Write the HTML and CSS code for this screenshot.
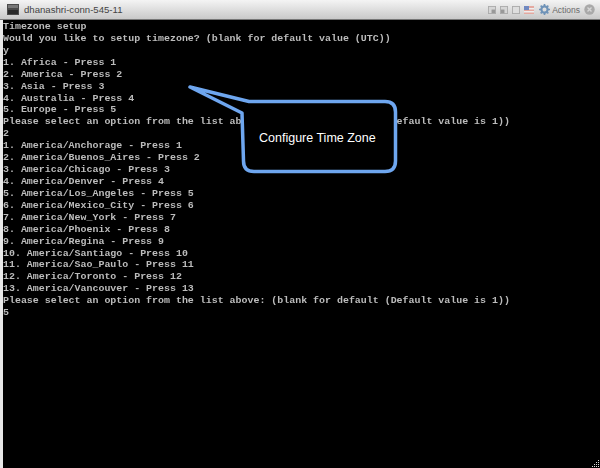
FILE: index.html
```html
<!DOCTYPE html>
<html lang="en">
<head>
<meta charset="utf-8">
<title>dhanashri-conn-545-11</title>
<link rel="stylesheet" href="styles.css">
</head>
<body>
<div class="window">
  <header class="titlebar">
    <svg class="app-icon" width="12" height="11" viewBox="0 0 12 11"><rect width="12" height="11" fill="#4a4a4a"/><rect x="1" y="1" width="10" height="3" fill="#777"/><rect x="1" y="6" width="10" height="4" fill="#2a2a2a"/></svg>
    <span class="title">dhanashri-conn-545-11</span>
    <div class="tools">
      <svg width="8" height="8" viewBox="0 0 9 9"><rect x=".5" y=".5" width="8" height="8" fill="#d6d6d6" stroke="#aaa"/><rect x="4" y="4" width="4" height="4" fill="#999"/></svg>
      <svg width="8" height="8" viewBox="0 0 9 9"><rect x=".5" y=".5" width="8" height="8" fill="#d6d6d6" stroke="#aaa"/><rect x="1" y="4" width="4" height="4" fill="#999"/></svg>
      <svg width="8" height="8" viewBox="0 0 9 9"><rect x=".5" y=".5" width="8" height="8" fill="#dedede" stroke="#aaa"/></svg>
      <svg class="flag" width="10" height="8" viewBox="0 0 10 8"><rect width="10" height="8" fill="#e4a9a0"/><rect y="2" width="10" height="1.5" fill="#eee"/><rect y="5" width="10" height="1.5" fill="#eee"/><rect width="5" height="4" fill="#7088c0"/></svg>
      <svg class="gear" width="11" height="11" viewBox="0 0 12 12"><circle cx="6" cy="6" r="3.4" fill="none" stroke="#6f93b8" stroke-width="2.4"/><path d="M6 0v2.4M6 9.6V12M0 6h2.4M9.6 6H12M1.8 1.800l1.7 1.700M8.500 8.500l1.700 1.700M1.800 10.200l1.700-1.700M8.500 3.500l1.700-1.700" stroke="#6f93b8" stroke-width="1.800"/></svg>
      <span class="actions">Actions</span>
      <svg class="close" width="11" height="11" viewBox="0 0 11 11"><circle cx="5.5" cy="5.5" r="5.2" fill="#a9a9a9"/><path d="M3.500 3.500l4 4M7.500 3.500l-4 4" stroke="#d6d6d6" stroke-width="1.400"/></svg>
    </div>
  </header>
  <pre class="terminal">Timezone setup
Would you like to setup timezone? (blank for default value (UTC))
y
1. Africa - Press 1
2. America - Press 2
3. Asia - Press 3
4. Australia - Press 4
5. Europe - Press 5
Please select an option from the list above: (blank for default (Default value is 1))
2
1. America/Anchorage - Press 1
2. America/Buenos_Aires - Press 2
3. America/Chicago - Press 3
4. America/Denver - Press 4
5. America/Los_Angeles - Press 5
6. America/Mexico_City - Press 6
7. America/New_York - Press 7
8. America/Phoenix - Press 8
9. America/Regina - Press 9
10. America/Santiago - Press 10
11. America/Sao_Paulo - Press 11
12. America/Toronto - Press 12
13. America/Vancouver - Press 13
Please select an option from the list above: (blank for default (Default value is 1))
5</pre>
</div>
<div class="callout">
  <svg class="callout-shape" width="600" height="468" viewBox="0 0 600 468"><path d="M190 87 L249 101.500 H385 Q395.500 101.500 395.500 112 V161 Q395.500 171.500 385 171.500 H254 Q243.500 171.500 243.500 161 L242 113 Z" fill="#000" stroke="#6ea6ef" stroke-width="3.500" stroke-linejoin="round"/></svg>
  <span class="callout-text">Configure Time Zone</span>
</div>
<svg class="resize" width="9" height="9" viewBox="0 0 9 9"><path d="M7 1h1v1H7zM7 3h1v1H7zM5 3h1v1H5zM7 5h1v1H7zM5 5h1v1H5zM3 5h1v1H3zM7 7h1v1H7zM5 7h1v1H5zM3 7h1v1H3zM1 7h1v1H1z" fill="#ddd"/></svg>
</body>
</html>
```
FILE: styles.css
```css
html, body {
  margin: 0;
  padding: 0;
  width: 600px;
  height: 468px;
  overflow: hidden;
  background: #000;
}
.window {
  display: flex;
  flex-direction: column;
  width: 600px;
  height: 468px;
}
.titlebar {
  display: flex;
  align-items: center;
  height: 20px;
  flex: none;
  padding: 0 5px 0 7px;
  box-sizing: border-box;
  background: linear-gradient(#f4f4f4, #c9c9c9);
  border-bottom: 1px solid #777;
  font-family: "Liberation Sans", Arial, sans-serif;
}
.app-icon { margin-right: 5px; }
.title {
  font-size: 9.6px;
  color: #444;
}
.tools {
  margin-left: auto;
  display: flex;
  align-items: center;
  gap: 4px;
}
.gear { margin-left: 1px; }
.actions {
  font-size: 8.5px;
  color: #6b6b6b;
  margin-left: -2px;
}
.terminal {
  flex: 1;
  margin: 0;
  padding: 0;
  padding-top: 1px;
  background: #000;
  border-left: 3px solid #e8e8e8;
  color: #bcbcbc;
  font-family: "Liberation Mono", "Courier New", monospace;
  font-size: 9.95px;
  line-height: 11.92px;
  font-weight: 700;
  overflow: hidden;
  filter: blur(0.35px);
}
.callout {
  position: absolute;
  left: 0;
  top: 0;
  width: 600px;
  height: 468px;
}
.callout-shape {
  position: absolute;
  left: 0;
  top: 0;
}
.callout-text {
  position: absolute;
  left: 259px;
  top: 130px;
  font-family: "Liberation Sans", Arial, sans-serif;
  font-size: 12.500px;
  line-height: 16px;
  color: #fff;
  white-space: nowrap;
}
.resize {
  position: absolute;
  right: 0;
  bottom: 0;
}
```
